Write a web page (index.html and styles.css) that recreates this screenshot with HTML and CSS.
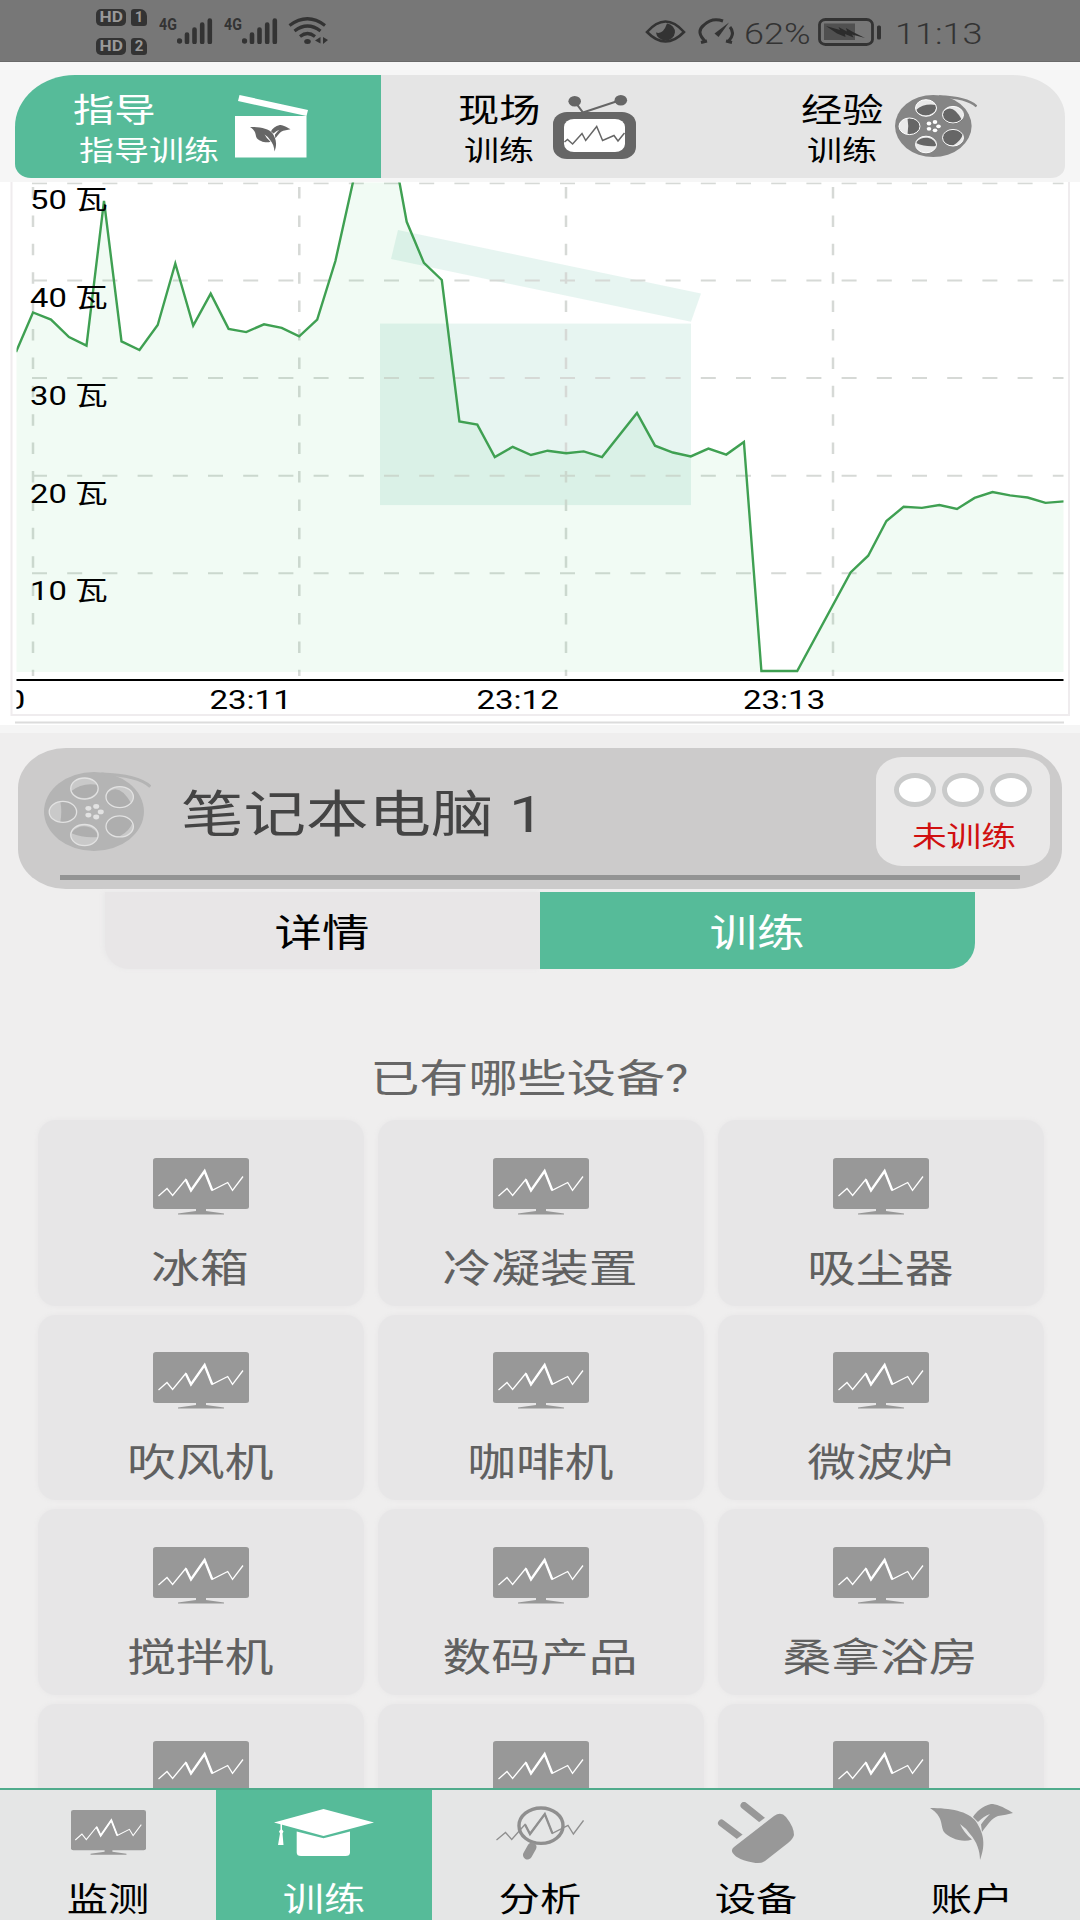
FILE: index.html
```html
<!DOCTYPE html>
<html lang="zh-CN">
<head>
    <meta charset="UTF-8">
    <meta name="viewport" content="width=device-width, initial-scale=1.0">
    <title>训练</title>
    <link rel="stylesheet" href="styles.css">
</head>
<body>
    <!-- shared icons -->
    <svg class="sprite" width="0" height="0">
        <symbol id="monitor" viewBox="0 0 96 57" preserveAspectRatio="none">
            <rect width="96" height="51" rx="3" ry="2.5" fill="#989898"/>
            <path d="M43 50.5H53V53L71 55.4V56.6H25V55.4L43 53Z" fill="#989898"/>
            <polyline points="5.5,38 14,30.5 19.6,37.5 32.7,21.5 38,32.5 51.6,13 59.2,32.3 74.7,24.5 79.5,32.3 90,18.5" fill="none" stroke="#fff" stroke-width="1.3"/>
            <polyline points="32.7,21.5 38,32.5 51.6,13 59.2,32.3" fill="none" stroke="#fff" stroke-width="2.4"/>
        </symbol>
        <symbol id="reel" viewBox="0 0 82 62" preserveAspectRatio="none">
            <ellipse class="reel-disk" cx="38.3" cy="31" rx="38.3" ry="31"/>
            <path class="reel-tape" d="M44 1.5C60 2 74 4 81.500 11.500"/>
            <g class="reel-light">
                <ellipse cx="31" cy="13" rx="10.500" ry="8.300"/>
                <ellipse cx="58" cy="19.700" rx="10.500" ry="8.300"/>
                <ellipse cx="58" cy="42.700" rx="10.500" ry="8.300"/>
                <ellipse cx="31" cy="49.500" rx="10.500" ry="8.300"/>
                <ellipse cx="14.500" cy="31.300" rx="10.500" ry="8.300"/>
            </g>
            <g class="reel-dark">
                <path d="M41 10A10.500 8.300 0 0 1 21 15Q29 8 41 10Z"/>
                <path d="M49 16Q58 8 67 25A10.500 8.300 0 0 1 49 16Z"/>
                <path d="M48 46A10.500 8.300 0 0 1 68 39Q66 46 58 50.500Q50 50 48 46Z"/>
                <path d="M21 48A10.500 8.300 0 0 1 41.300 51Q30 52 21 48Z"/>
                <path d="M12.500 23.200A10.500 8.300 0 1 1 12.500 39.400Q14 31 12.500 23.200Z"/>
            </g>
            <g class="reel-rim">
                <ellipse cx="31" cy="13" rx="10.500" ry="8.300"/>
                <ellipse cx="58" cy="19.700" rx="10.500" ry="8.300"/>
                <ellipse cx="58" cy="42.700" rx="10.500" ry="8.300"/>
                <ellipse cx="31" cy="49.500" rx="10.500" ry="8.300"/>
                <ellipse cx="14.500" cy="31.300" rx="10.500" ry="8.300"/>
            </g>
            <g class="reel-dots">
                <ellipse cx="34" cy="28.500" rx="2.300" ry="1.900"/>
                <ellipse cx="40" cy="27" rx="2.300" ry="1.900"/>
                <ellipse cx="43.500" cy="31.300" rx="2.300" ry="1.900"/>
                <ellipse cx="40" cy="35.300" rx="2.300" ry="1.900"/>
                <ellipse cx="34" cy="33.800" rx="2.300" ry="1.900"/>
            </g>
        </symbol>
        <symbol id="leaf" viewBox="0 0 84 57" preserveAspectRatio="none">
            <path d="M0 4C20 4 38 7 46 17.500C52 27 57 38 50 56C50 47 47 38 40 30Q36 24 30 20Q34 29 42 35.500C32 39 19 34 14 28C10 21 14 13 0 4Z"/>
            <path d="M83 9C72 2 66 0 61 0C52 2 46 8 43 13L48 18Q54 12 60 10Q54 16 51 20.500L52 28C58 20 62 14 68 12Q76 11 83 9Z"/>
        </symbol>
        <symbol id="bars" viewBox="0 0 36 26">
            <circle cx="2.500" cy="23" r="2.700"/>
            <path d="M10 24V16.500M17.500 24V11.500M25.200 24V6.500M32.800 24V2.500" stroke="#333" stroke-width="4.600" stroke-linecap="round"/>
        </symbol>
    </svg>

    <div class="status-bar">
        <div class="hd-list">
            <div class="hd"><b><i>HD</i></b><em>1</em></div>
            <div class="hd"><b><i>HD</i></b><em>2</em></div>
        </div>
        <div class="signal">
            <span>4G</span>
            <svg width="36" height="26"><use href="#bars"/></svg>
        </div>
        <div class="signal">
            <span>4G</span>
            <svg width="36" height="26"><use href="#bars"/></svg>
        </div>
        <svg class="wifi" width="41" height="28" viewBox="0 0 41 28" fill="none" stroke="#333" stroke-width="3.200">
            <path d="M1.500 8.500Q19.500 -5 37 8.500"/>
            <path d="M6.500 14Q19.500 4 32.500 14"/>
            <path d="M12 19.500Q19.500 13.500 27 19.500"/>
            <ellipse cx="19.500" cy="24.500" rx="3.300" ry="2.500" fill="#333" stroke="none"/>
            <path d="M27 23.500L32.500 20V26.500ZM40 23L35 20V27Z" fill="#333" stroke="none"/>
        </svg>
        <div class="status-right">
            <svg width="41" height="24" viewBox="0 0 41 24">
                <path d="M2 12Q20.500 -9 39 12Q20.500 31 2 12Z" fill="none" stroke="#333" stroke-width="2.600"/>
                <path d="M22 3.500A9.500 8.500 0 1 1 11 12.500Q18 15 22 3.500Z" fill="#333"/>
            </svg>
            <svg class="gauge" width="37" height="27" viewBox="0 0 37 27" fill="none" stroke="#333" stroke-width="3">
                <path d="M8 24Q-3 14 6 7Q14 -1 25 3M32 9Q38 16 29.500 24M3 24.500L9 23M34 24.500L28 23"/>
                <path d="M31 4.500L16.500 15.500L20.500 19Z" fill="#333" stroke="none"/>
            </svg>
            <span class="percent"><i>62%</i></span>
            <svg class="battery" width="64" height="28" viewBox="0 0 64 28">
                <rect x="1.500" y="1.500" width="53" height="25" rx="6" ry="5" fill="none" stroke="#333" stroke-width="2.800"/>
                <rect x="6" y="5.500" width="31" height="16.500" fill="#505050"/>
                <path d="M8 8L22 12L20.500 9L29 13.500L28 10L35 14L47 20L34 16.500L35.500 19.500L27 16L27.500 19L19 15.500Z" fill="#2c2c2c"/>
                <rect x="59" y="7.500" width="4" height="14" rx="1.500" fill="#333"/>
            </svg>
            <span class="clock"><i>11:13</i></span>
        </div>
    </div>

    <div class="mode-tabs">
        <div class="mode mode-guide active">
            <div class="mode-text">
                <span>指导</span>
                <small>指导训练</small>
            </div>
            <svg width="74" height="63" viewBox="0 0 74 63">
                <path d="M4.500 0L73 15L71.500 21L3 6Z" fill="#fff"/>
                <rect y="21" width="71.500" height="41.500" fill="#fff"/>
                <use href="#leaf" x="15" y="30" width="41" height="27" fill="#666"/>
            </svg>
        </div>
        <div class="mode mode-live">
            <div class="mode-text">
                <span>现场</span>
                <small>训练</small>
            </div>
            <svg width="83" height="64" viewBox="0 0 83 64">
                <path d="M21.700 6.300L30 17.500L67.800 5" fill="none" stroke="#666" stroke-width="2"/>
                <ellipse cx="21.700" cy="6.300" rx="6.300" ry="5.200" fill="#666"/>
                <ellipse cx="67.800" cy="5.200" rx="6.300" ry="5.200" fill="#666"/>
                <rect y="17" width="83" height="47" rx="14" ry="12" fill="#666"/>
                <rect x="11" y="24" width="61" height="33" rx="10" ry="8" fill="#fff"/>
                <polyline points="11.500,47 14.500,44.500 19.600,49 29,38.500 32.700,45.500 43.700,31.500 49.600,45.500 61,40.500 65,46 71.500,38" fill="none" stroke="#666" stroke-width="1.500"/>
            </svg>
        </div>
        <div class="mode mode-exp">
            <div class="mode-text">
                <span>经验</span>
                <small>训练</small>
            </div>
            <svg width="82" height="62"><use href="#reel"/></svg>
        </div>
    </div>

    <div class="chart-card">
        <svg class="chart" width="1080" height="547" viewBox="0 180 1080 547">
            <defs>
                <clipPath id="plot"><rect x="16.500" y="182.500" width="1047" height="534"/></clipPath>
            </defs>
            <path d="M11.500 182V715H1069V182" fill="none" stroke="#efecee" stroke-width="2"/>
            <path d="M15 722.500H1064" stroke="#dcdcdc" stroke-width="2"/>

            <!-- open box behind the curve -->
            <g fill="#57bb99" fill-opacity=".14">
                <rect x="380" y="323.600" width="311" height="181.500"/>
                <path d="M398 230L701 293.500L691 321.800L391 259Z"/>
            </g>

            <g clip-path="url(#plot)">
                <g stroke="#d6d9d6" stroke-width="2">
                    <path d="M32 183.200H1064M32 280.500H1064M32 378H1064M32 475.800H1064M32 573.300H1064" stroke-dasharray="15 20.200"/>
                    <path d="M33 187V676M299.300 187V676M566 187V676M833 187V676" stroke-width="2.500" stroke-dasharray="11.500 16.900"/>
                </g>
                <path class="area" d="M16 672V352L33 312.500L51 319.600L69 337.100L86.500 345.700L104 201L121.500 341.400L139.500 350L157.700 325L175.300 263.500L193.200 325.500L210.700 293.600L228.600 328.900L246.200 332.100L264 324.300L281.700 327.900L299.200 336.400L317.200 319.600L335.400 261L353 182L371 100L385 120L399.400 182L406.700 221.800L423.900 262.900L441.800 280L459.400 421.400L477.300 424.600L494.800 457.100L512.700 446.800L531 455L547.600 450.700L566.200 453.200L583.700 451.400L602 457.100L637 413L655 445.700L672.900 452.500L690.800 456.400L708.400 448.600L726.300 454.600L743.900 442L761.400 671H797.200L850.600 572.500L868.200 555.700L886.400 521L903.600 506.800L921.900 507.900L939.400 505L957 508.900L974.600 497.900L992.500 492L1010 495.400L1027.600 497.500L1045.500 502.900L1064 501.400V672Z"/>
                <path class="line" d="M16 352L33 312.500L51 319.600L69 337.100L86.500 345.700L104 201L121.500 341.400L139.500 350L157.700 325L175.300 263.500L193.200 325.500L210.700 293.600L228.600 328.900L246.200 332.100L264 324.300L281.700 327.900L299.200 336.400L317.200 319.600L335.400 261L353 182L371 100L385 120L399.400 182L406.700 221.800L423.900 262.900L441.800 280L459.400 421.400L477.300 424.600L494.800 457.100L512.700 446.800L531 455L547.600 450.700L566.200 453.200L583.700 451.400L602 457.100L637 413L655 445.700L672.900 452.500L690.800 456.400L708.400 448.600L726.300 454.600L743.900 442L761.400 671H797.200L850.600 572.500L868.200 555.700L886.400 521L903.600 506.800L921.900 507.900L939.400 505L957 508.900L974.600 497.900L992.500 492L1010 495.400L1027.600 497.500L1045.500 502.900L1064 501.400"/>
                <path d="M16 680H1064" stroke="#000" stroke-width="2"/>

                <g class="axis-text">
                    <text transform="translate(30 209) scale(1.26 1)">50 瓦</text>
                    <text transform="translate(30 306.500) scale(1.26 1)">40 瓦</text>
                    <text transform="translate(30 404.500) scale(1.26 1)">30 瓦</text>
                    <text transform="translate(30 502.500) scale(1.26 1)">20 瓦</text>
                    <text transform="translate(30 600) scale(1.26 1)">10 瓦</text>
                    <text transform="translate(-57 708.500) scale(1.27 1)">23:10</text>
                    <text transform="translate(209.500 708.500) scale(1.27 1)">23:11</text>
                    <text transform="translate(476.500 708.500) scale(1.27 1)">23:12</text>
                    <text transform="translate(743 708.500) scale(1.27 1)">23:13</text>
                </g>
            </g>
        </svg>
    </div>

    <div class="content">
        <div class="device">
            <svg class="device-icon" width="107" height="79"><use href="#reel"/></svg>
            <span class="device-name">笔记本电脑 1</span>
            <div class="badge">
                <div class="dots"><i></i><i></i><i></i></div>
                <span>未训练</span>
            </div>
        </div>

        <div class="sub-tabs">
            <div class="sub-tab"><span>详情</span></div>
            <div class="sub-tab active"><span>训练</span></div>
        </div>

        <p class="question"><span>已有哪些设备?</span></p>

        <div class="grid">
            <div class="card"><svg width="96" height="57"><use href="#monitor"/></svg><span>冰箱</span></div>
            <div class="card"><svg width="96" height="57"><use href="#monitor"/></svg><span>冷凝装置</span></div>
            <div class="card"><svg width="96" height="57"><use href="#monitor"/></svg><span>吸尘器</span></div>
            <div class="card"><svg width="96" height="57"><use href="#monitor"/></svg><span>吹风机</span></div>
            <div class="card"><svg width="96" height="57"><use href="#monitor"/></svg><span>咖啡机</span></div>
            <div class="card"><svg width="96" height="57"><use href="#monitor"/></svg><span>微波炉</span></div>
            <div class="card"><svg width="96" height="57"><use href="#monitor"/></svg><span>搅拌机</span></div>
            <div class="card"><svg width="96" height="57"><use href="#monitor"/></svg><span>数码产品</span></div>
            <div class="card"><svg width="96" height="57"><use href="#monitor"/></svg><span>桑拿浴房</span></div>
            <div class="card"><svg width="96" height="57"><use href="#monitor"/></svg></div>
            <div class="card"><svg width="96" height="57"><use href="#monitor"/></svg></div>
            <div class="card"><svg width="96" height="57"><use href="#monitor"/></svg></div>
        </div>
    </div>

    <div class="bottom-nav">
        <div class="nav-item">
            <div class="nav-icon"><svg width="75" height="45"><use href="#monitor"/></svg></div>
            <span>监测</span>
        </div>
        <div class="nav-item active">
            <div class="nav-icon">
                <svg width="100" height="48" viewBox="0 0 100 48" fill="#fff">
                    <path d="M0 13.500L49.500 0L100 13.500L49.500 27Z"/>
                    <path d="M22.700 22.500L49.500 29.300L76 22.500V43.500Q76 47 71.500 47H27Q22.700 47 22.700 43.500Z"/>
                    <path d="M6.500 15H8V20.500L9.500 22.500L8.500 24.500L9.500 36H4L6 24.500L5 22.500L6.500 20.500Z"/>
                </svg>
            </div>
            <span>训练</span>
        </div>
        <div class="nav-item">
            <div class="nav-icon">
                <svg width="88" height="54" viewBox="0 0 88 54" fill="none" stroke="#8f8f8f">
                    <ellipse cx="45" cy="19.700" rx="22" ry="17.700" stroke-width="3.400"/>
                    <path d="M36 41L31.500 49" stroke="#959595" stroke-width="9" stroke-linecap="round"/>
                    <path d="M0.500 34L9.500 26.500L15.700 33.500L29 18.500L34 28L48.800 8L56.400 27.300L72 19.300L77.400 28L87.500 14.500" stroke-width="1.300"/>
                    <path d="M29 18.500L34 28L48.800 8L56.400 27.300" stroke-width="2.300"/>
                </svg>
            </div>
            <span>分析</span>
        </div>
        <div class="nav-item">
            <div class="nav-icon">
                <svg width="78" height="62" viewBox="0 0 78 62" fill="#989898">
                    <path d="M4.500 21L25 36.500M27 3.500L47 19.500" stroke="#989898" stroke-width="7" stroke-linecap="round"/>
                    <path d="M13 42L53 12L58 18L20 47Z" fill="#e5e6e6"/>
                    <path d="M17 45L57 14Q64 9 69 15Q77 25 77 33Q76 37 71 41L48 59Q44 62 36 60.500Q26 59 19 54.500Q12 49 17 45Z"/>
                </svg>
            </div>
            <span>设备</span>
        </div>
        <div class="nav-item">
            <div class="nav-icon"><svg width="84" height="57" fill="#989898"><use href="#leaf"/></svg></div>
            <span>账户</span>
        </div>
    </div>
</body>
</html>
```
FILE: styles.css
```css
* {
    margin: 0;
    padding: 0;
    box-sizing: border-box;
}

body {
    width: 1080px;
    height: 1920px;
    overflow: hidden;
    display: flex;
    flex-direction: column;
    font-family: Roboto, "Noto Sans CJK SC", sans-serif;
    background: #efeeee;
    color: #000;
}

i, em {
    font-style: normal;
}

svg {
    display: block;
    flex-shrink: 0;
}

.sprite {
    position: absolute;
}

/* film reel colours, overridden by .device-icon */
.reel-disk { fill: var(--disk, #858585); }
.reel-tape { fill: none; stroke: var(--disk, #858585); stroke-width: 2.400; }
.reel-light { fill: var(--light, #e9e9e9); }
.reel-dark { fill: var(--dark, #666); }
.reel-rim { fill: none; stroke: var(--rim, #fff); }
.reel-dots { fill: var(--rim, #fff); }

/* status bar */
.status-bar {
    height: 62px;
    flex-shrink: 0;
    display: flex;
    align-items: flex-start;
    padding-left: 96px;
    background: #777;
    border-bottom: 1px solid #6a6a6a;
    color: #333;
}

.hd-list {
    padding-top: 9px;
    width: 63px;
}

.hd {
    display: flex;
    gap: 5px;
    height: 17px;
    margin-bottom: 12px;
    font-size: 15px;
    line-height: 17px;
    text-align: center;
    color: #999;
}

.hd b {
    width: 30px;
    border-radius: 5px;
    background: #333;
}

.hd b i {
    display: inline-block;
    transform: scaleX(1.15);
}

.hd em {
    width: 16px;
    border-radius: 3px 7px 3px 3px;
    background: #333;
    font-weight: 700;
}

.signal {
    display: flex;
    width: 64.500px;
    padding-top: 18px;
}

.signal span {
    width: 18px;
    font-size: 16.500px;
    font-weight: 700;
    line-height: 13px;
    transform: scaleX(.86);
    transform-origin: left;
}

.signal svg {
    fill: #333;
}

.wifi {
    margin-top: 17px;
}

.status-right {
    display: flex;
    align-items: flex-start;
    margin-left: auto;
    padding-top: 18px;
    width: 435px;
}

.status-right > svg:first-child {
    margin: 2px 12px 0 0;
}

.gauge {
    margin-right: 9px;
}

.percent, .clock {
    font-size: 30px;
    font-weight: 300;
    line-height: 31px;
    width: 74px;
}

.percent i, .clock i {
    display: inline-block;
    transform: scaleX(1.2);
    transform-origin: left;
}

.battery {
    margin-right: 13px;
}

/* mode tabs */
.mode-tabs {
    display: flex;
    flex-shrink: 0;
    height: 120px;
    padding: 13px 15px 4px;
    background: #f6f6f6;
}

.mode {
    display: flex;
    background: #e5e5e5;
    padding-top: 14px;
}

.mode svg {
    margin-top: 6px;
}

.mode-text {
    flex-shrink: 0;
    padding-top: 2px;
}

.mode-text span, .mode-text small {
    display: block;
    white-space: nowrap;
    transform: scaleX(1.25);
    transform-origin: left;
}

.mode-text span {
    font-size: 33px;
    line-height: 39px;
}

.mode-text small {
    font-size: 28px;
    line-height: 43px;
    margin-left: 6px;
}

.mode-guide {
    width: 366px;
    padding-left: 58px;
    border-radius: 60px 0 0 16px / 52px 0 0 14px;
}

.mode-guide .mode-text {
    width: 162px;
}

.mode-live {
    width: 332px;
    padding-left: 77px;
}

.mode-live .mode-text {
    width: 95px;
}

.mode-exp {
    width: 352px;
    padding-left: 88px;
    border-radius: 0 52px 14px 0 / 0 42px 12px 0;
}

.mode-exp .mode-text {
    width: 94px;
}

.active {
    background: #56bb99;
    color: #fff;
}

/* power chart */
.chart-card {
    flex-shrink: 0;
    height: 551px;
    background: linear-gradient(#fff 543px, #f5f5f5 543px);
}

.chart {
    margin-top: -2px;
}

.chart .area {
    fill: #50c878;
    fill-opacity: .08;
}

.chart .line {
    fill: none;
    stroke: #3fa052;
    stroke-width: 2.400;
}

.axis-text {
    font-size: 26px;
}

/* content */
.content {
    flex: 1;
    min-height: 0;
    overflow: hidden;
    padding: 15px 18px 0;
}

.device {
    display: flex;
    height: 141px;
    border-radius: 48px / 40px;
    background: linear-gradient(#939494, #939494) 42px 127px / 960px 5px no-repeat #cccbcb;
}

.device-icon {
    --disk: #b4b4b4;
    --light: #c9c9c9;
    --dark: #aeaeae;
    --rim: #e2e2e2;
    margin: 24px 30px 0 26px;
}

.device-name {
    flex: 1;
    font-size: 50px;
    line-height: 134px;
    color: #444;
    white-space: nowrap;
    transform: scaleX(1.25);
    transform-origin: left;
}

.badge {
    width: 174px;
    height: 109px;
    margin: 9px 12px 0 0;
    padding-top: 16px;
    border-radius: 26px / 22px;
    background: #e9e8e8;
    text-align: center;
}

.dots {
    display: flex;
    justify-content: center;
    gap: 6px;
}

.dots i {
    width: 42px;
    height: 34px;
    border: 5px solid #c9caca;
    border-radius: 50%;
    background: #fff;
}

.badge span {
    display: block;
    margin-left: 2px;
    font-size: 28px;
    line-height: 62px;
    color: #d01010;
    transform: scaleX(1.24);
}

.sub-tabs {
    display: flex;
    width: 870px;
    height: 77px;
    margin: 3px 0 0 87px;
}

.sub-tab {
    flex: 1;
    text-align: center;
    font-size: 38px;
    line-height: 83px;
    background: #e8e6e7;
    border-radius: 0 0 0 24px;
}

.sub-tab:first-child {
    box-shadow: -2px 0 4px #e9e8e9;
}

.sub-tab.active {
    background: #56bb99;
    border-radius: 0 0 26px 0;
}

.sub-tab span, .question span, .card span, .nav-item span {
    display: inline-block;
    transform: scaleX(1.25);
}

.question {
    margin: 83px 22px 0 0;
    font-size: 39px;
    line-height: 54px;
    text-align: center;
    color: #666;
}

.question span {
    transform: scaleX(1.26);
}

.grid {
    display: grid;
    grid-template-columns: repeat(3, 326px);
    grid-auto-rows: 185.500px;
    gap: 9px 14px;
    margin: 14px 0 0 20px;
}

.card {
    display: flex;
    flex-direction: column;
    align-items: center;
    padding-top: 37.500px;
    border-radius: 18px;
    background: #e7e6e7;
    box-shadow: 0 0 5px #e7e6e7;
    font-size: 39px;
    color: #606060;
}

.card span {
    margin: 28px 1px 0 0;
    line-height: 52px;
}

/* bottom navigation */
.bottom-nav {
    display: flex;
    flex-shrink: 0;
    height: 132px;
    border-top: 2px solid #50ab8c;
    background: #e5e6e6;
}

.nav-item {
    flex: 1;
    display: flex;
    flex-direction: column;
    align-items: center;
    font-size: 33px;
}

.nav-icon {
    height: 85px;
    flex-shrink: 0;
    display: flex;
    align-items: center;
}

.nav-item span {
    margin-top: 3px;
    line-height: 42px;
    padding-top: 1px;
}
```
